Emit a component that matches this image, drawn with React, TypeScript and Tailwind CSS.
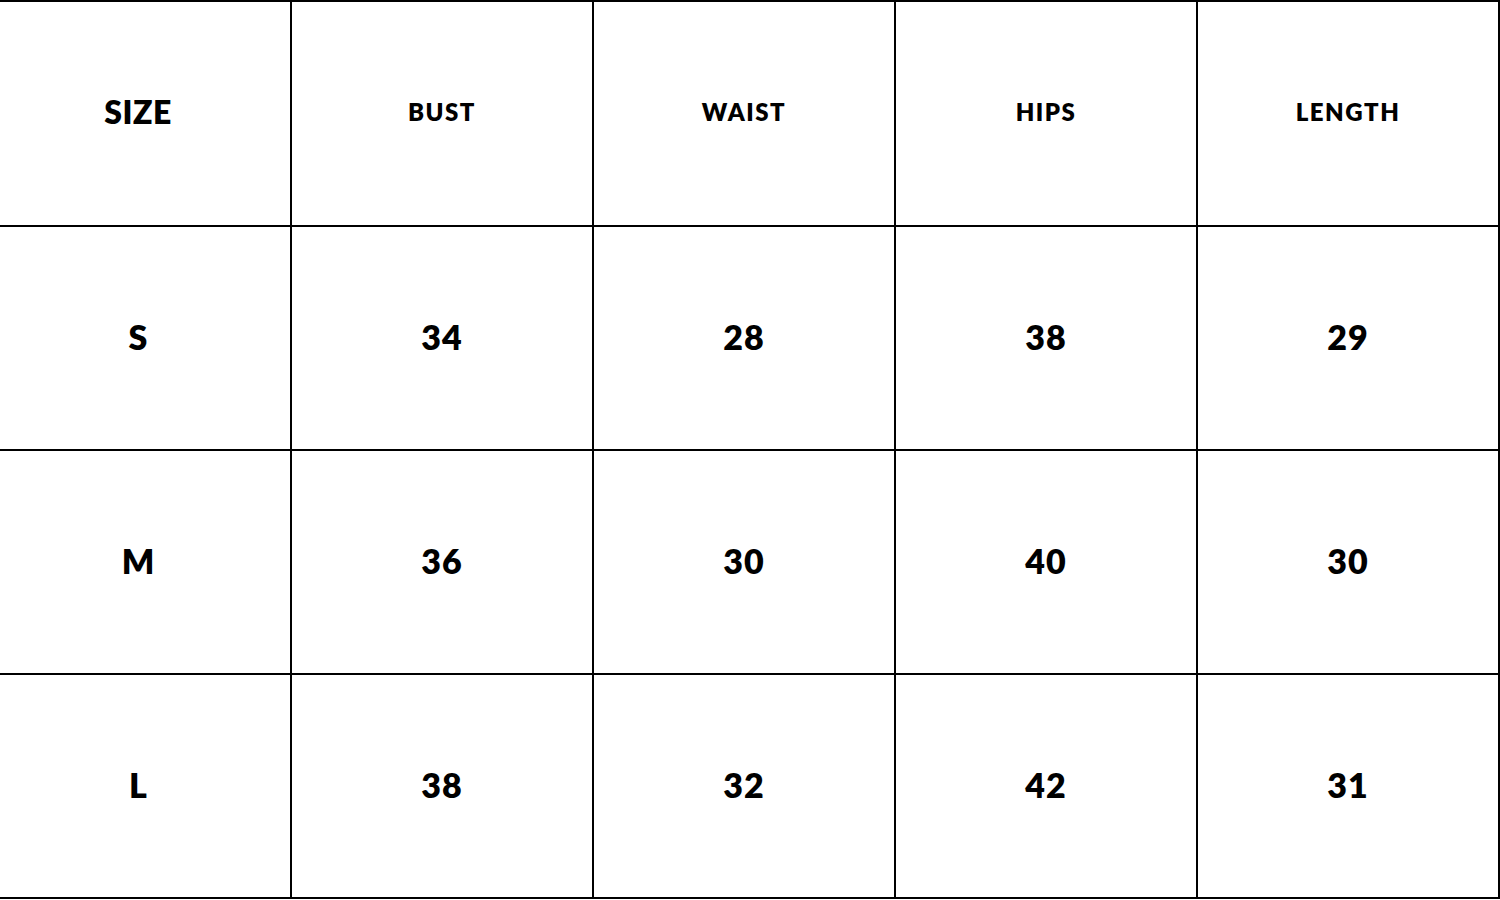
import React from "react";

const headers = ["BUST", "WAIST", "HIPS", "LENGTH"];
const rows: [string, string[]][] = [
  ["S", ["34", "28", "38", "29"]],
  ["M", ["36", "30", "40", "30"]],
  ["L", ["38", "32", "42", "31"]],
];

export default function App() {
  return (
    <div className="w-[1500px] h-[900px] bg-white overflow-hidden" style={{ fontFamily: "Lato, 'Open Sans', sans-serif" }}>
      <div className="grid grid-cols-[290px_300px_300px_300px_300px] grid-rows-[223px_222px_222px_222px] gap-[2px] bg-black pt-[2px] pr-[2px] pb-[2px] w-[1500px]">
        <div className="bg-white flex items-center justify-center pr-[14px] pb-[4px] text-[32px] font-extrabold text-black tracking-[0.5px]">SIZE</div>
        {headers.map((h) => (
          <div key={h} className="bg-white flex items-center justify-center pb-[4px] text-[24px] font-extrabold text-black tracking-[1.5px]">
            {h}
          </div>
        ))}
        {rows.map(([s, vals]) => (
          <React.Fragment key={s}>
            <div className="bg-white flex items-center justify-center pr-[14px] pb-[4px] text-[34px] font-extrabold text-black">{s}</div>
            {vals.map((v, i) => (
              <div key={i} className="bg-white flex items-center justify-center pb-[4px] text-[34px] font-extrabold text-black tracking-[1px]">
                {v}
              </div>
            ))}
          </React.Fragment>
        ))}
      </div>
    </div>
  );
}
